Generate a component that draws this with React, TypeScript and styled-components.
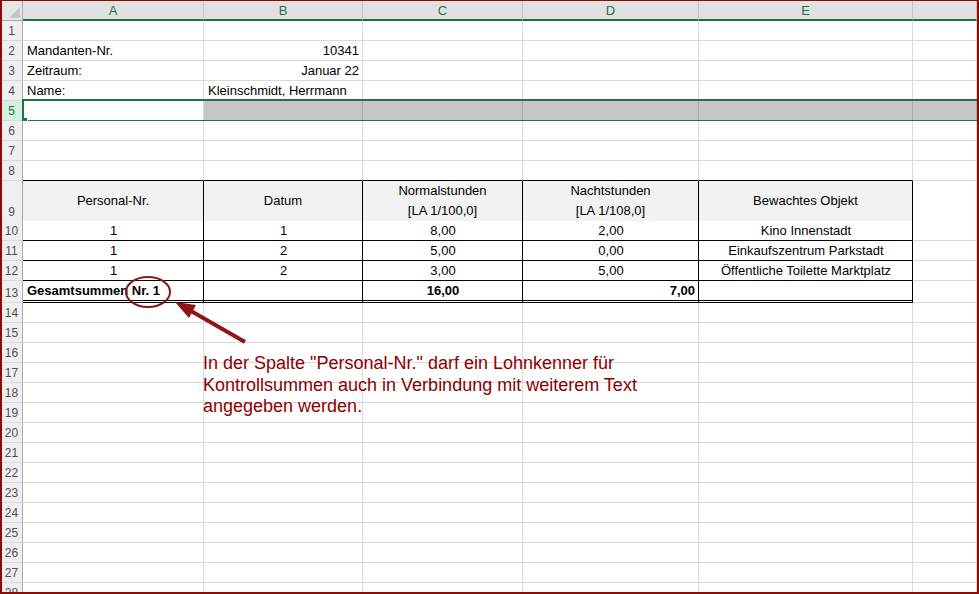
import React from 'react';
import styled, { createGlobalStyle, css } from 'styled-components';

const GlobalStyle = createGlobalStyle`
    html, body {
        margin: 0;
        padding: 0;
        background: #fff;
    }
    body {
        font-family: "Liberation Sans", Arial, sans-serif;
    }
`;

const COLS = '21px 181px 159px 160px 176px 214px 1fr';
const GRID = '#dadada';
const GREEN = '#217346';
const MAROON = '#8b0000';

type Align = 'left' | 'center' | 'right';
type Kind = 'plain' | 'edge' | 'head' | 'body' | 'total' | 'selected';

interface CellDef {
    text: React.ReactNode;
    align?: Align;
    bold?: boolean;
}

interface RowDef {
    n: number;
    h?: number;
    kind?: Kind;
    cells?: (CellDef | null)[];
}

const Frame = styled.div`
    position: relative;
    width: 979px;
    height: 594px;
    box-sizing: border-box;
    border: 2px solid #8b0a0a;
    border-top-width: 1px;
    overflow: hidden;
    background: #fff;
    font-size: 13px;
    color: #000;
`;

const HeaderRow = styled.div`
    display: grid;
    grid-template-columns: ${COLS};
    height: 20px;
`;

const Corner = styled.div`
    position: relative;
    box-sizing: border-box;
    background: #e6e6e6;
    border-right: 1px solid #ababab;
    border-bottom: 1px solid #ababab;

    &::after {
        content: '';
        position: absolute;
        right: 2px;
        bottom: 2px;
        border-style: solid;
        border-width: 0 0 11px 11px;
        border-color: transparent transparent #c4c4c4 transparent;
    }
`;

const ColHead = styled.div`
    box-sizing: border-box;
    display: flex;
    align-items: center;
    justify-content: center;
    background: #e1e1e1;
    border-right: 1px solid #c6c6c6;
    border-bottom: 2px solid ${GREEN};
    color: ${GREEN};
    font-size: 13px;
    padding-top: 1px;
`;

const Row = styled.div<{ $h: number }>`
    position: relative;
    display: grid;
    grid-template-columns: ${COLS};
    height: ${({ $h }) => $h}px;
`;

const RowHead = styled.div<{ $selected?: boolean }>`
    box-sizing: border-box;
    display: flex;
    align-items: flex-end;
    justify-content: center;
    padding: 0 1px 2px 0;
    font-size: 12px;
    background: ${({ $selected }) => ($selected ? '#d3f0e0' : '#efefef')};
    color: ${({ $selected }) => ($selected ? GREEN : '#505050')};
    border-right: 1px solid #ababab;
    border-bottom: 1px solid ${GRID};
`;

type Edge = 'grid' | 'black' | 'double' | 'dark';

const edge = (e: Edge) =>
    e === 'double'
        ? '3px double #000'
        : `1px solid ${e === 'black' ? '#000' : e === 'dark' ? '#ababab' : GRID}`;

const Cell = styled.div<{
    $align: Align;
    $right: Edge;
    $bottom: Edge;
    $fill: string;
    $bold?: boolean;
    $head?: boolean;
}>`
    box-sizing: border-box;
    display: flex;
    align-items: flex-end;
    justify-content: ${({ $align }) =>
        $align === 'left' ? 'flex-start' : $align === 'right' ? 'flex-end' : 'center'};
    padding: 0 3px 1px 4px;
    line-height: 16px;
    white-space: nowrap;
    background: ${({ $fill }) => $fill};
    font-weight: ${({ $bold }) => ($bold ? 700 : 400)};
    border-right: ${({ $right }) => edge($right)};
    border-bottom: ${({ $bottom }) => edge($bottom)};

    ${({ $head }) =>
        $head &&
        css`
            align-items: center;
            text-align: center;
            line-height: 20px;
            padding: 0 3px;
        `}
`;

const Selection = styled.div`
    position: absolute;
    left: 20px;
    right: -4px;
    top: -2px;
    height: 23px;
    box-sizing: border-box;
    border: 2px solid ${GREEN};
    pointer-events: none;
`;

const FillHandle = styled.div`
    position: absolute;
    left: -2px;
    top: 17px;
    width: 5px;
    height: 5px;
    background: ${GREEN};
    border-right: 1px solid #fff;
`;

const Note = styled.p`
    position: absolute;
    left: 201px;
    top: 352px;
    margin: 0;
    font-family: "Liberation Sans", Arial, sans-serif;
    font-size: 18px;
    line-height: 21.5px;
    color: ${MAROON};
    white-space: nowrap;
`;

const Marks = styled.svg`
    position: absolute;
    left: -2px;
    top: -1px;
    pointer-events: none;
`;

const c = (text: React.ReactNode, align?: Align, bold?: boolean): CellDef => ({ text, align, bold });

const two = (a: string, b: string) => (
    <span>
        {a}
        <br />
        {b}
    </span>
);

const rows: RowDef[] = [
    { n: 1 },
    { n: 2, cells: [c('Mandanten-Nr.'), c('10341', 'right')] },
    { n: 3, cells: [c('Zeitraum:'), c('Januar 22', 'right')] },
    { n: 4, cells: [c('Name:'), c('Kleinschmidt, Herrmann')] },
    { n: 5, kind: 'selected' },
    { n: 6 },
    { n: 7 },
    { n: 8, kind: 'edge' },
    {
        n: 9,
        h: 40,
        kind: 'head',
        cells: [
            c('Personal-Nr.'),
            c('Datum'),
            c(two('Normalstunden', '[LA 1/100,0]')),
            c(two('Nachtstunden', '[LA 1/108,0]')),
            c('Bewachtes Objekt'),
        ],
    },
    { n: 10, kind: 'body', cells: [c('1'), c('1'), c('8,00'), c('2,00'), c('Kino Innenstadt')] },
    { n: 11, kind: 'body', cells: [c('1'), c('2'), c('5,00'), c('0,00'), c('Einkaufszentrum Parkstadt')] },
    { n: 12, kind: 'body', cells: [c('1'), c('2'), c('3,00'), c('5,00'), c('Öffentliche Toilette Marktplatz')] },
    {
        n: 13,
        h: 22,
        kind: 'total',
        cells: [c('Gesamtsummen Nr. 1', 'left', true), null, c('16,00', 'center', true), c('7,00', 'right', true)],
    },
    ...Array.from({ length: 15 }, (_, i) => ({ n: 14 + i })),
];

const SheetRow = ({ row }: { row: RowDef }) => {
    const kind = row.kind ?? 'plain';
    const inTable = kind === 'head' || kind === 'body' || kind === 'total';
    const selected = kind === 'selected';

    return (
        <Row $h={row.h ?? 20}>
            <RowHead $selected={selected}>{row.n}</RowHead>
            {[0, 1, 2, 3, 4, 5].map((col) => {
                const def = row.cells?.[col] ?? null;
                const boxed = col < 5 && inTable;
                const right: Edge = boxed ? 'black' : selected && col > 0 ? 'dark' : 'grid';
                const bottom: Edge =
                    col < 5 && kind === 'total'
                        ? 'double'
                        : boxed || (col < 5 && kind === 'edge')
                          ? 'black'
                          : 'grid';
                const fill =
                    kind === 'head' && col < 5 ? '#f2f2f2' : selected && col > 0 ? '#c6c6c6' : '#fff';
                return (
                    <Cell
                        key={col}
                        $align={def?.align ?? (inTable ? 'center' : 'left')}
                        $right={right}
                        $bottom={bottom}
                        $fill={fill}
                        $bold={def?.bold}
                        $head={kind === 'head'}
                    >
                        {def?.text}
                    </Cell>
                );
            })}
            {selected && (
                <Selection>
                    <FillHandle />
                </Selection>
            )}
        </Row>
    );
};

export default function App() {
    return (
        <Frame>
            <GlobalStyle />
            <HeaderRow>
                <Corner />
                {['A', 'B', 'C', 'D', 'E', ''].map((l, i) => (
                    <ColHead key={i}>{l}</ColHead>
                ))}
            </HeaderRow>
            {rows.map((row) => (
                <SheetRow key={row.n} row={row} />
            ))}

            <Marks width={979} height={594} viewBox="0 0 979 594">
                <ellipse cx={148} cy={292} rx={22} ry={15} fill="none" stroke="#8c1515" strokeWidth={2} />
                <line x1={191} y1={311} x2={245} y2={342} stroke="#8c1515" strokeWidth={4} />
                <polygon points="175,302 189,318 196,305" fill="#8c1515" />
            </Marks>

            <Note>
                In der Spalte "Personal-Nr." darf ein Lohnkenner für
                <br />
                Kontrollsummen auch in Verbindung mit weiterem Text
                <br />
                angegeben werden.
            </Note>
        </Frame>
    );
}
